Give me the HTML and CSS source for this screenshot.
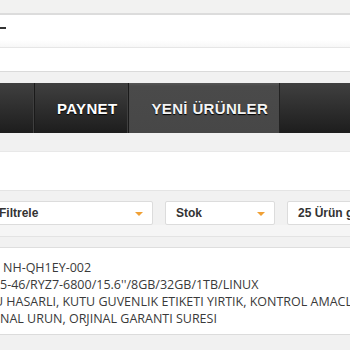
FILE: index.html
```html
<!DOCTYPE html>
<html>
<head>
<meta charset="utf-8">
<link rel="stylesheet" href="styles.css">
</head>
<body>
<div class="page">
  <div class="topbar"></div>
  <div class="header">
    <div class="header-main"><span class="logo-stub"></span></div>
    <div class="header-sub"></div>
  </div>
  <div class="gap-a"></div>
  <nav class="nav">
    <div class="nav-item nav-first"></div>
    <div class="nav-item">PAYNET</div>
    <div class="nav-item active">YENİ ÜRÜNLER</div>
    <div class="nav-item nav-rest"></div>
  </nav>
  <div class="gap-b"></div>
  <div class="band"></div>
  <div class="filters">
    <div class="select sel-1"><span>Filtrele</span><i class="arrow"></i></div>
    <div class="select sel-2"><span>Stok</span><i class="arrow"></i></div>
    <div class="select sel-3"><span>25 Ürün göster</span><i class="arrow"></i></div>
  </div>
  <div class="filters-foot"></div>
  <div class="product">
    <div class="line l1">NH-QH1EY-002</div>
    <div class="line l2">5-46/RYZ7-6800/15.6''/8GB/32GB/1TB/LINUX</div>
    <div class="line l3">U HASARLI, KUTU GUVENLIK ETIKETI YIRTIK, KONTROL AMACLI</div>
    <div class="line l4">NAL URUN, ORJINAL GARANTI SURESI</div>
  </div>
  <div class="bottom"></div>
</div>
</body>
</html>
```
FILE: styles.css
```css
html, body {
  margin: 0;
  padding: 0;
  background: #f1f1f1;
  overflow: hidden;
}
.page {
  width: 350px;
  height: 350px;
  overflow: hidden;
  display: flex;
  flex-direction: column;
}
.topbar {
  height: 13px;
  background: #f2f2f1;
  flex: none;
}
.header {
  flex: none;
  background: #fff;
  border-top: 2px solid #dcdcdc;
}
.header-main {
  height: 32px;
  border-bottom: 1px solid #e6e6e6;
  background: linear-gradient(#fff 0, #fff 25px, #f7f7f7 32px);
  position: relative;
}
.logo-stub {
  position: absolute;
  left: 0;
  top: 12px;
  width: 6px;
  height: 2px;
  background: #333;
}
.header-sub {
  height: 23px;
  border-bottom: 1px solid #dadada;
}
.gap-a {
  height: 11px;
  flex: none;
  background: #f1f1f1;
}
.nav {
  flex: none;
  height: 50px;
  display: flex;
  background: linear-gradient(#404040, #2b2b2b 60%, #1d1d1d);
  font-family: "Liberation Sans", Arial, sans-serif;
  font-weight: bold;
  font-size: 15px;
  color: #fff;
}
.nav-item {
  display: flex;
  align-items: center;
  padding: 0 11px 0 22px;
  border-right: 1px solid #1a1a1a;
  box-shadow: inset -1px 0 0 #3f3f3f;
  text-shadow: 0 1px 1px #000;
  letter-spacing: 0.35px;
}
.nav-first {
  width: 34px;
  padding: 0;
}
.nav-item.active {
  background: linear-gradient(#575757 0, #4a4a4a 3px, #474747);
  color: #f4f4f4;
  box-shadow: none;
  border-right: 1px solid #222;
}
.nav-rest {
  flex: 1;
  border: 0;
  box-shadow: none;
}
.gap-b {
  height: 18px;
  flex: none;
}
.band {
  flex: none;
  height: 38px;
  background: #fff;
  border-top: 1px solid #e8e8e8;
  border-bottom: 1px solid #e4e4e4;
}
.filters {
  flex: none;
  display: flex;
  gap: 12px;
  padding-top: 10px;
  margin-left: -12px;
  font-family: "Liberation Sans", Arial, sans-serif;
  font-weight: bold;
  font-size: 12px;
  color: #333;
}
.select {
  flex: none;
  height: 22px;
  background: #fff;
  border: 1px solid #dcdcdc;
  border-radius: 2px;
  display: flex;
  align-items: center;
  justify-content: space-between;
  padding: 0 9px 0 10px;
  white-space: nowrap;
}
.sel-1 { width: 144px; }
.sel-2 { width: 89px; }
.sel-3 { width: 120px; }
.arrow {
  width: 0;
  height: 0;
  border-left: 4px solid transparent;
  border-right: 4px solid transparent;
  border-top: 4px solid #f0a035;
  margin-top: 1px;
}
.filters-foot {
  flex: none;
  height: 11px;
  background: #f5f5f5;
  border-bottom: 1px solid #e3e3e3;
}
.product {
  flex: none;
  margin-top: 10px;
  background: #fff;
  border-top: 1px solid #dedede;
  border-bottom: 1px solid #dcdcdc;
  padding-top: 11px;
  box-sizing: border-box;
  height: 88px;
  font-family: "Open Sans", sans-serif;
  font-size: 12.5px;
  line-height: 17px;
  color: #3a3a3a;
}
.line {
  white-space: nowrap;
}
.l1 { margin-left: 3px; }
.l2 { margin-left: 0; }
.l3 { margin-left: -6px; }
.l4 { margin-left: 0; }
.bottom {
  flex: 1;
  background: #f1f1f1;
}
```
